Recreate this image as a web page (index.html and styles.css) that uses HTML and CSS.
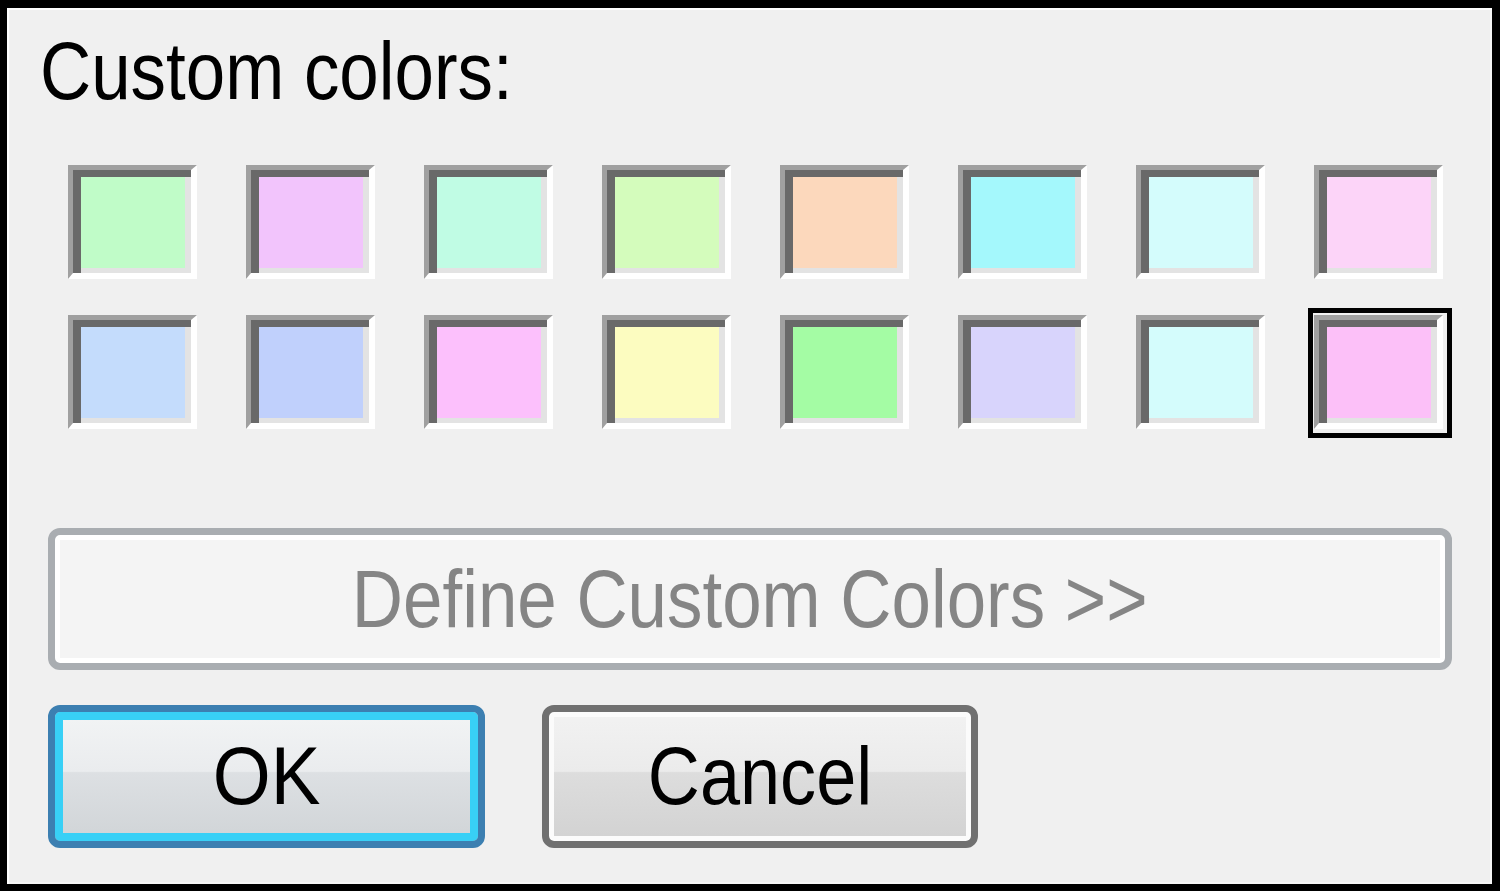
FILE: index.html
```html
<!DOCTYPE html>
<html lang="en">
<head>
<meta charset="utf-8">
<title>Custom colors</title>
<link rel="stylesheet" href="styles.css">
</head>
<body>
<div class="dialog">
  <div class="label"><span class="txt">Custom colors:</span></div>
  <div class="swatches">
    <div class="swatch c1"></div>
    <div class="swatch c2"></div>
    <div class="swatch c3"></div>
    <div class="swatch c4"></div>
    <div class="swatch c5"></div>
    <div class="swatch c6"></div>
    <div class="swatch c7"></div>
    <div class="swatch c8"></div>
    <div class="swatch c9"></div>
    <div class="swatch c10"></div>
    <div class="swatch c11"></div>
    <div class="swatch c12"></div>
    <div class="swatch c13"></div>
    <div class="swatch c14"></div>
    <div class="swatch c15"></div>
    <div class="swatch c16 selected"></div>
  </div>
  <button class="define" disabled><span class="txt">Define Custom Colors &gt;&gt;</span></button>
  <div class="actions">
    <button class="btn ok"><span class="txt">OK</span></button>
    <button class="btn cancel"><span class="txt">Cancel</span></button>
  </div>
</div>
</body>
</html>
```

FILE: styles.css
```css
* { box-sizing: border-box; }
html, body { margin: 0; padding: 0; background: #f0f0f0; }
body { width: 1500px; height: 891px; overflow: hidden; }

.dialog {
  width: 1500px;
  height: 891px;
  background: #f0f0f0;
  border-style: solid;
  border-color: #000;
  border-width: 8px 8px 7px 7px;
  box-shadow: inset 2px 2px 0 #ffffff, inset -2px -2px 0 #f6f6f6;
  padding-top: 23px;
  font-family: "Liberation Sans", Arial, sans-serif;
  font-size: 81px;
  display: flex;
  flex-direction: column;
  align-items: flex-start;
}

.txt {
  display: inline-block;
  transform: scaleX(0.875);
  white-space: nowrap;
}

.label {
  line-height: 81px;
  height: 81px;
  margin-left: 33px;
  color: #000;
}
.label .txt { transform-origin: 0 50%; }

.swatches {
  margin-top: 53px;
  margin-left: 61px;
  display: grid;
  grid-template-columns: repeat(8, 129px);
  grid-auto-rows: 114px;
  column-gap: 49px;
  row-gap: 36px;
}

.swatch {
  position: relative;
  border-style: solid;
  border-width: 5px 6px 6px 5px;
  border-color: #a0a0a0 #ffffff #ffffff #a0a0a0;
  box-shadow: inset 8px 7px 0 #696969, inset -6px -5px 0 #e3e3e3;
}
.swatch.selected::after {
  content: "";
  position: absolute;
  top: -12px;
  left: -11px;
  right: -15px;
  bottom: -15px;
  border: 5px solid #000;
}

.c1 { background: #c0fcc8; }
.c2 { background: #f2c4fc; }
.c3 { background: #c0fce4; }
.c4 { background: #d4fcbc; }
.c5 { background: #fcd8bc; }
.c6 { background: #a4f8fc; }
.c7 { background: #d4fcfc; }
.c8 { background: #fcd4f8; }
.c9 { background: #c4dcfc; }
.c10 { background: #c0d0fc; }
.c11 { background: #fcc0fc; }
.c12 { background: #fcfcc0; }
.c13 { background: #a4fca4; }
.c14 { background: #d8d4fc; }
.c15 { background: #d4fcfc; }
.c16 { background: #fcc0f8; }

button {
  font-family: inherit;
  font-size: 81px;
  line-height: 81px;
  padding: 0;
  margin: 0;
  display: flex;
  align-items: center;
  justify-content: center;
  cursor: default;
}

.define {
  margin-top: 99px;
  margin-left: 41px;
  width: 1404px;
  height: 142px;
  border: 7px solid #a9adb1;
  border-radius: 12px;
  background: #f4f4f4;
  box-shadow: inset 0 0 0 5px #ffffff;
  color: #858585;
}

.actions {
  margin-top: 35px;
  margin-left: 41px;
  display: flex;
  gap: 57px;
}

.btn {
  height: 143px;
  color: #000;
  border-radius: 12px;
}
.ok {
  width: 437px;
  border: 7px solid #3c7fb1;
  background: linear-gradient(#f2f4f5 0%, #eaecee 46%, #dde0e3 47%, #d0d4d7 100%);
  box-shadow: inset 0 0 0 8px #38d0f6;
}
.ok .txt { transform: scaleX(0.92); }
.cancel {
  width: 436px;
  border: 7px solid #707070;
  background: linear-gradient(#f2f2f2 0%, #ebebeb 46%, #dddddd 47%, #d2d2d2 100%);
  box-shadow: inset 0 0 0 5px #fbfbfb;
}
.cancel .txt { transform: scaleX(0.89); }
```
